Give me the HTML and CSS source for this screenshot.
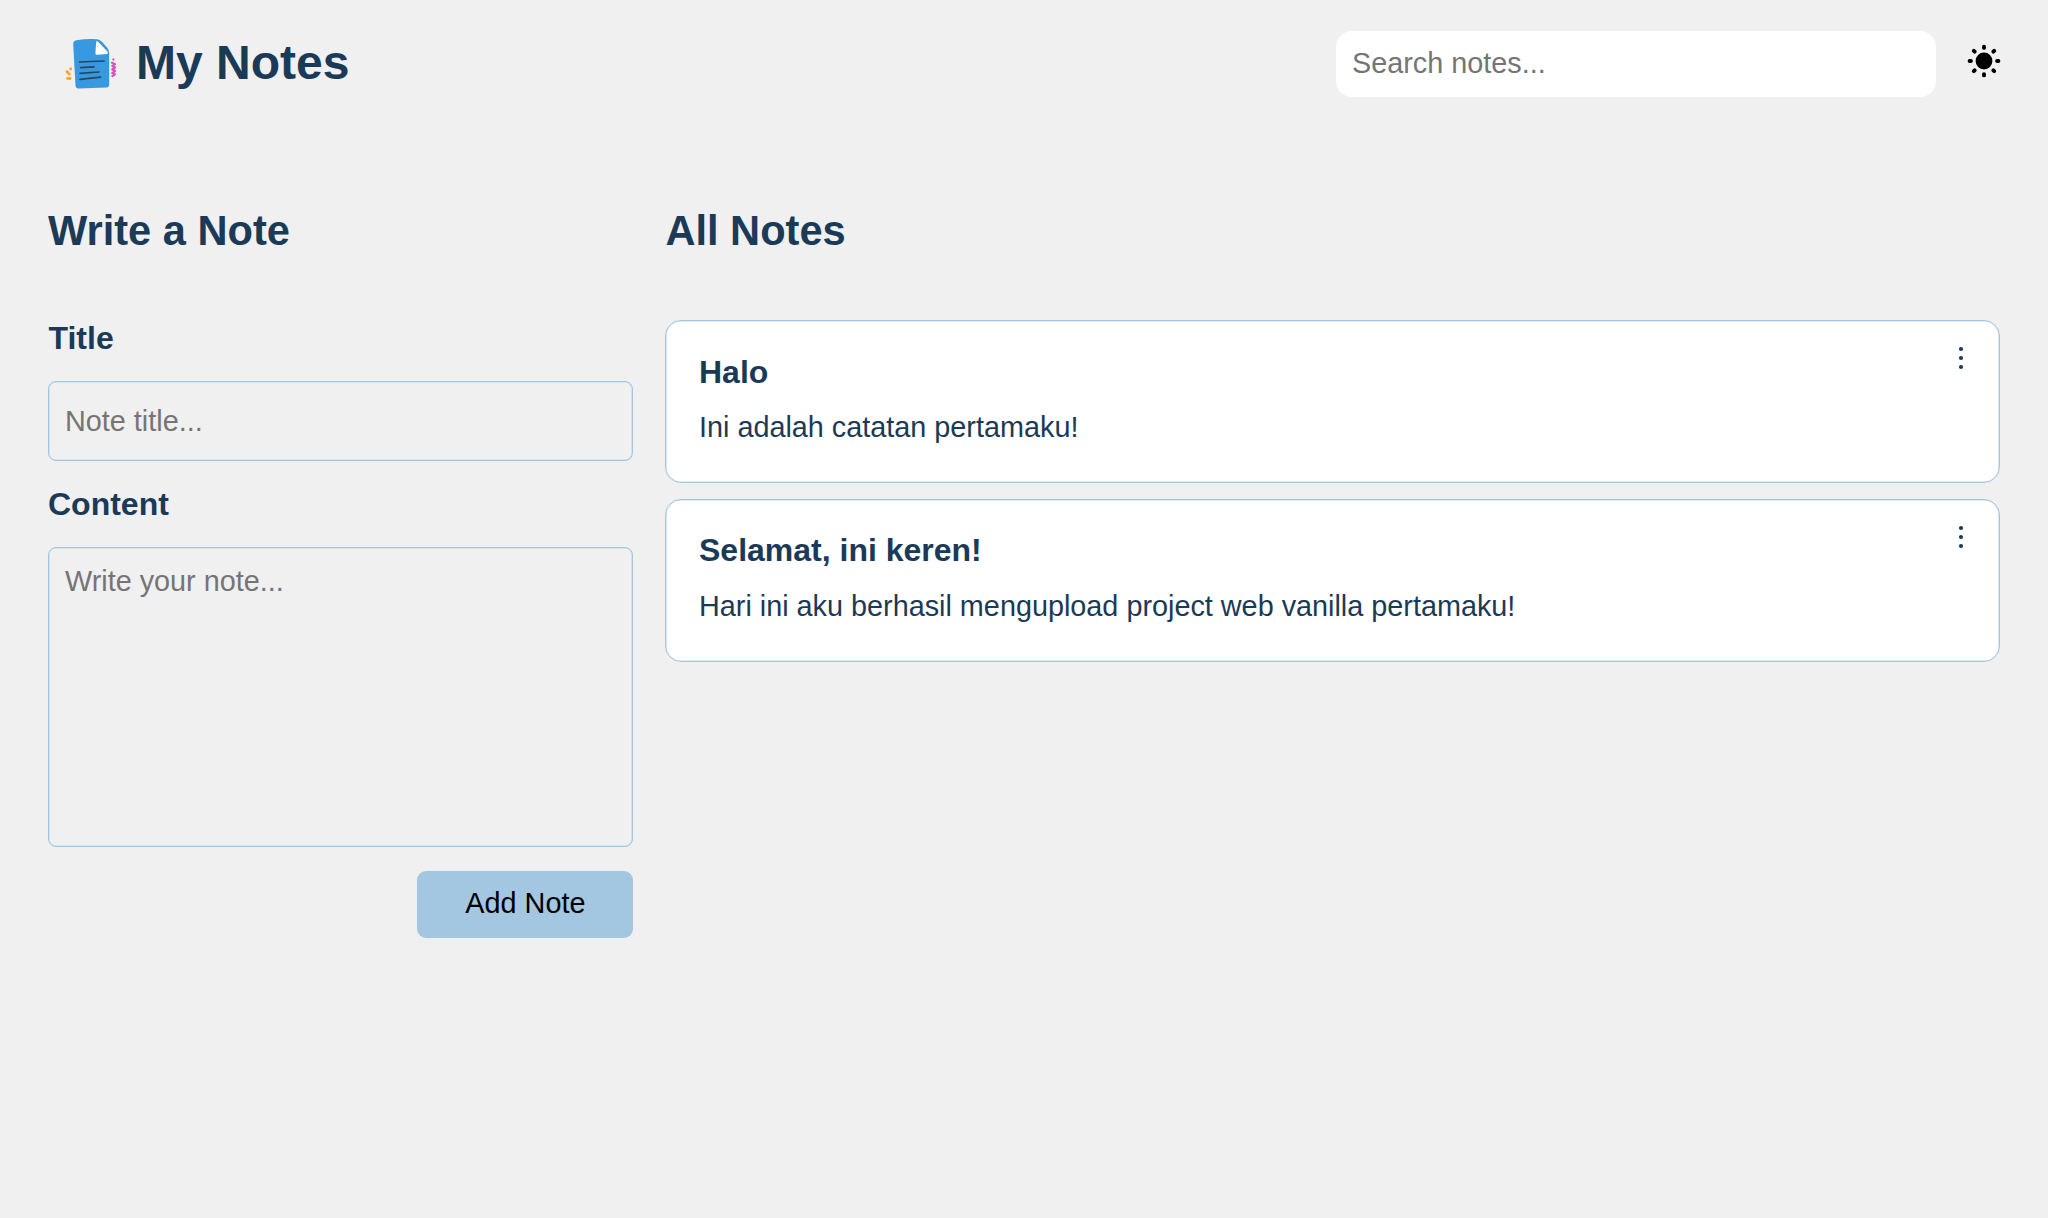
FILE: index.html
```html
<!DOCTYPE html>
<html lang="id">
<head>
<meta charset="utf-8">
<title>My Notes</title>
<link rel="stylesheet" href="styles.css">
</head>
<body>
<header class="header">
  <div class="brand">
    <svg class="logo" viewBox="0 0 56 56" aria-hidden="true">
      <path fill="#3999e0" d="M12.5 4.2 Q23 2.5 33.5 3.2 Q36 3.6 38.2 6 L43.6 12.2 Q45.2 14.2 45.2 17 L45.2 48.5 Q45.2 51.4 42.3 51.5 L15 52.6 Q11.8 52.8 11.5 49.5 L9.2 8.5 Q9 4.8 12.5 4.2Z"/>
      <path fill="#fff" d="M32.2 5.4 Q33.6 5 34.6 6.3 L43.6 15.8 Q44.6 17.8 43 18 L33 18.8 Q31.4 18.8 31.4 17.2Z"/>
      <g fill="none" stroke="#224864" stroke-width="1.7" stroke-linecap="round">
        <path d="M15.6 26 L40 25"/><path d="M16.8 31.6 L30 30.8"/><path d="M16 37.4 L35 36"/><path d="M16 43.3 L36.6 41.1"/>
      </g>
      <g fill="none" stroke="#ffa51f" stroke-width="2.8" stroke-linecap="round">
        <path d="M6.6 32.8 L6.8 33"/><path d="M3 35.5 L5.3 38.2"/><path d="M3.6 42.4 L6.1 42.4"/>
      </g>
      <path fill="none" stroke="#dc4fbd" stroke-width="2.2" stroke-linecap="round" stroke-linejoin="round" d="M49.4 23.4 v.2 M48 26.8 L51 28.2 L48.3 30 L51 31.5 L48.3 33.5 L51 35 L48.3 37 L51 38.2 L48.4 40.2"/>
    </svg>
    <h1 class="brand-name">My Notes</h1>
  </div>
  <div class="tools">
    <input class="search" type="text" placeholder="Search notes...">
    <button class="theme" type="button" aria-label="Theme">
      <svg class="sun" viewBox="0 0 36 36">
        <circle cx="18" cy="18" r="8.4"/>
        <g fill="none" stroke="#000" stroke-width="3.9" stroke-linecap="round">
          <path d="M18 3.6v1.3M18 31.1v1.3M3.6 18h1.3M31.1 18h1.3M7.8 7.8l.9.9M27.3 27.3l.9.9M7.8 28.2l.9-.9M27.3 8.7l.9-.9"/>
        </g>
      </svg>
    </button>
  </div>
</header>
<main class="main">
  <section class="editor">
    <h2 class="heading">Write a Note</h2>
    <form class="form">
      <label class="label label-title" for="title">Title</label>
      <input class="field" id="title" type="text" placeholder="Note title...">
      <label class="label label-content" for="content">Content</label>
      <textarea class="field area" id="content" placeholder="Write your note..."></textarea>
      <button class="add" type="button">Add Note</button>
    </form>
  </section>
  <section class="notes">
    <h2 class="heading">All Notes</h2>
    <div class="list">
      <article class="card">
        <div>
          <h3 class="card-title">Halo</h3>
          <p class="card-text">Ini adalah catatan pertamaku!</p>
        </div>
        <svg class="dots" viewBox="0 0 6 24"><circle cx="3" cy="3" r="2.1"/><circle cx="3" cy="12" r="2.1"/><circle cx="3" cy="21" r="2.1"/></svg>
      </article>
      <article class="card">
        <div>
          <h3 class="card-title">Selamat, ini keren!</h3>
          <p class="card-text">Hari ini aku berhasil mengupload project web vanilla pertamaku!</p>
        </div>
        <svg class="dots" viewBox="0 0 6 24"><circle cx="3" cy="3" r="2.1"/><circle cx="3" cy="12" r="2.1"/><circle cx="3" cy="21" r="2.1"/></svg>
      </article>
    </div>
  </section>
</main>
</body>
</html>
```
FILE: styles.css
```css
* {
  box-sizing: border-box;
  margin: 0;
  padding: 0;
}

body {
  min-height: 100vh;
  background: #f0f0f0;
  color: #1b3a57;
  font-family: Arial, "Liberation Sans", sans-serif;
  font-size: 28.8px;
}

input,
textarea,
button {
  font: inherit;
  border: 0;
  outline: 0;
}

::placeholder {
  color: #757575;
}

.header {
  display: flex;
  justify-content: space-between;
  align-items: center;
  padding: 31px 46px 0 64px;
}

.brand {
  display: flex;
  align-items: center;
  gap: 16px;
  height: 66px;
}

.logo {
  width: 56px;
  height: 56px;
}

.brand-name {
  font-size: 48px;
  line-height: 56px;
  padding-bottom: 2px;
}

.tools {
  display: flex;
  align-items: center;
  gap: 30px;
}

.search {
  width: 600px;
  height: 66px;
  padding: 0 16px 1px;
  border-radius: 16px;
  background: #fff;
}

.theme {
  display: flex;
  padding-bottom: 6px;
  background: none;
}

.sun {
  width: 36px;
  height: 36px;
}

.main {
  display: grid;
  grid-template-columns: 585.4px 1fr;
  gap: 32px;
  padding: 110px 48px 0;
}

.heading {
  font-size: 41.6px;
  line-height: 48px;
  margin-bottom: 65px;
}

.form {
  display: flex;
  flex-direction: column;
}

.label {
  font-size: 32px;
  font-weight: bold;
  line-height: 36px;
  margin-bottom: 25px;
}

.label-title {
  padding-left: 0.5px;
}

.label-content {
  margin-top: 25px;
}

.field {
  height: 80px;
  padding: 1px 16px 0;
  border: 1px solid #a3c6e0;
  border-radius: 8px;
  box-shadow: inset 0 0 0 0.6px #c5d9e7;
  background: transparent;
}

.area {
  height: 300px;
  padding-top: 16px;
  line-height: 34px;
  resize: none;
}

.add {
  align-self: flex-end;
  width: 216px;
  height: 67px;
  margin-top: 23.5px;
  padding-bottom: 2px;
  border-radius: 9px;
  background: #a4c7e1;
  color: #000;
}

.list {
  display: flex;
  flex-direction: column;
  gap: 16px;
}

.card {
  display: flex;
  justify-content: space-between;
  align-items: flex-start;
  height: 162.8px;
  padding: 32.6px 35px 0 32.6px;
  border: 1px solid #a3c6e0;
  border-radius: 16px;
  box-shadow: inset 0 0 0 0.6px #c5d9e7;
  background: #fff;
}

.card-title {
  font-size: 32px;
  line-height: 36px;
}

.card-text {
  margin-top: 20.6px;
  line-height: 34px;
}

.dots {
  width: 6px;
  height: 24px;
  margin-top: -7.6px;
  fill: #1b3a57;
}
```
